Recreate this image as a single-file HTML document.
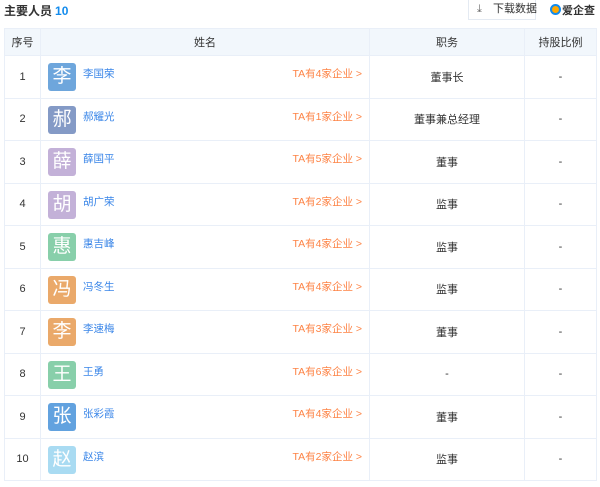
<!DOCTYPE html>
<html><head><meta charset="utf-8"><style>
body{margin:0;width:600px;height:487px;background:#fff;font-family:"Liberation Sans","Noto Sans CJK SC",sans-serif;font-size:11px;color:#333;position:relative;overflow:hidden}
.title{position:absolute;left:4px;top:2px;font-size:12px;font-weight:bold;color:#333}
.title span{color:#128bed;margin-left:3px}
.btn{position:absolute;left:468px;top:-2px;width:68px;height:22px;border:1px solid #e4eaf2;box-sizing:border-box;font-size:11px;color:#333;line-height:20px;white-space:nowrap}
.logo{position:absolute;left:550px;top:2px;font-size:11px;font-weight:bold;color:#333;white-space:nowrap}
table{position:absolute;left:4px;top:28px;width:592px;border-collapse:collapse;table-layout:fixed}
td,th{border:1px solid #e9eff8;text-align:center;font-weight:normal;padding:0}
th{background:#f2f7fc;height:26px;font-size:11px;color:#333}
td{height:41.5px;position:relative;font-size:11px}
.av{position:absolute;left:7px;top:7px;width:28px;height:28px;border-radius:3px;color:#fff;font-size:19px;line-height:28px;text-align:center}
.nm{position:absolute;left:42px;top:10px;color:#3a86e8;font-size:10.5px}
.ta{position:absolute;right:7px;top:10px;color:#fd8345;font-size:10.5px}
</style></head><body>
<div class="title">主要人员<span>10</span></div>
<div class="btn"><span style="position:absolute;left:8px;top:0;color:#666">⤓</span><span style="position:absolute;left:24px">下载数据</span></div>
<div class="logo"><span style="display:inline-block;width:11px;height:11px;border-radius:50%;border:2px solid #128bed;box-sizing:border-box;background:#ffa800;vertical-align:-1px;margin-right:1px"></span>爱企查</div>
<table>
<colgroup><col style="width:36px"><col style="width:329px"><col style="width:155px"><col style="width:72px"></colgroup>
<tr><th>序号</th><th>姓名</th><th>职务</th><th>持股比例</th></tr>
<tr><td>1</td><td><div class="av" style="background:#6ea6dc">李</div><span class="nm">李国荣</span><span class="ta">TA有4家企业 &gt;</span></td><td>董事长</td><td>-</td></tr>
<tr><td>2</td><td><div class="av" style="background:#849ac6">郝</div><span class="nm">郝耀光</span><span class="ta">TA有1家企业 &gt;</span></td><td>董事兼总经理</td><td>-</td></tr>
<tr><td>3</td><td><div class="av" style="background:#c3b1d8">薛</div><span class="nm">薛国平</span><span class="ta">TA有5家企业 &gt;</span></td><td>董事</td><td>-</td></tr>
<tr><td>4</td><td><div class="av" style="background:#c3b1d8">胡</div><span class="nm">胡广荣</span><span class="ta">TA有2家企业 &gt;</span></td><td>监事</td><td>-</td></tr>
<tr><td>5</td><td><div class="av" style="background:#88cfaa">惠</div><span class="nm">惠吉峰</span><span class="ta">TA有4家企业 &gt;</span></td><td>监事</td><td>-</td></tr>
<tr><td>6</td><td><div class="av" style="background:#eaa96a">冯</div><span class="nm">冯冬生</span><span class="ta">TA有4家企业 &gt;</span></td><td>监事</td><td>-</td></tr>
<tr><td>7</td><td><div class="av" style="background:#eaa96a">李</div><span class="nm">李速梅</span><span class="ta">TA有3家企业 &gt;</span></td><td>董事</td><td>-</td></tr>
<tr><td>8</td><td><div class="av" style="background:#88cfaa">王</div><span class="nm">王勇</span><span class="ta">TA有6家企业 &gt;</span></td><td>-</td><td>-</td></tr>
<tr><td>9</td><td><div class="av" style="background:#62a2df">张</div><span class="nm">张彩霞</span><span class="ta">TA有4家企业 &gt;</span></td><td>董事</td><td>-</td></tr>
<tr><td>10</td><td><div class="av" style="background:#a9dbf2">赵</div><span class="nm">赵滨</span><span class="ta">TA有2家企业 &gt;</span></td><td>监事</td><td>-</td></tr>
</table>
</body></html>
